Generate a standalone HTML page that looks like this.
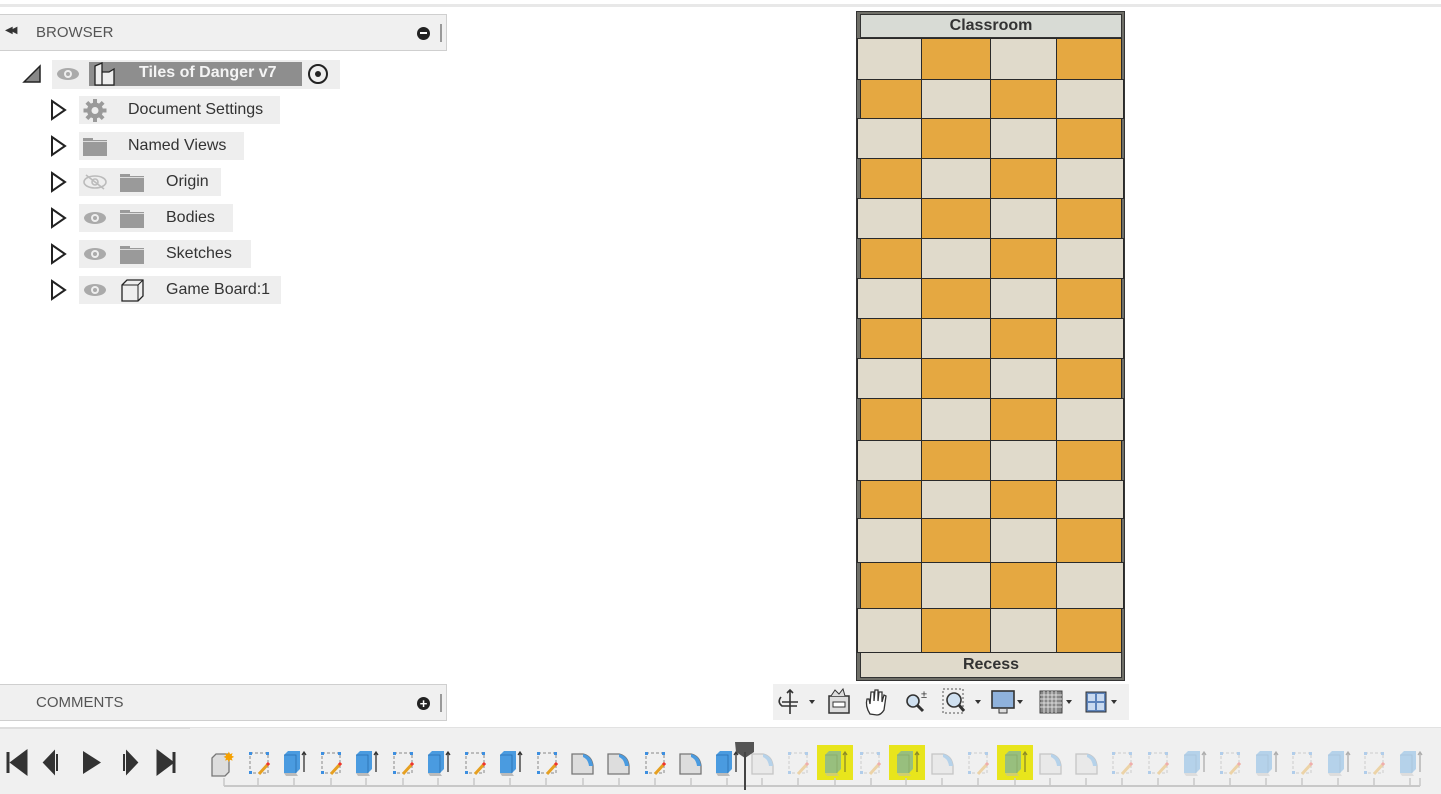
<!DOCTYPE html>
<html><head><meta charset="utf-8"><style>
*{margin:0;padding:0;box-sizing:border-box}
body{width:1441px;height:794px;background:#fff;position:relative;overflow:hidden;font-family:"Liberation Sans",sans-serif;}
.abs{position:absolute}
.panel{position:absolute;left:0;width:447px;background:#f0f0f0;border:1px solid #cfcfcf;border-left:none}
.row{position:absolute;height:28px;background:#eeeeee;font-size:15px;color:#3c3c3c;line-height:28px}
.tri{position:absolute;left:50px;width:16px;height:20px}
.cell{position:absolute;border:1px solid #2a2a2a}
.o{background:#e5a841}.b{background:#e0dacb}
</style></head><body>
<div class="abs" style="left:0;top:4px;width:1441px;height:3px;background:#e8e8e8"></div>

<!-- Browser header -->
<div class="panel" style="top:14px;height:37px">
  <div class="abs" style="left:5px;top:10px;font-size:10px;color:#333;letter-spacing:-3px">◀◀</div>
  <div class="abs" style="left:36px;top:9px;font-size:15px;color:#555">BROWSER</div>
  <div class="abs" style="left:417px;top:12px;width:13px;height:13px;border-radius:50%;background:#222"><div class="abs" style="left:3px;top:5px;width:7px;height:2px;background:#fff"></div></div>
  <div class="abs" style="left:440px;top:9px;width:2px;height:18px;border-left:1px solid #999;border-right:1px solid #999"></div>
</div>

<!-- root row -->
<svg class="abs" style="left:22px;top:64px" width="20" height="20"><path d="M2 18 L18 2 L18 18 Z" fill="#888" stroke="#222" stroke-width="1.5"/></svg>
<div class="row" style="left:52px;top:60px;width:288px;height:29px"></div>
<svg class="abs" style="left:56px;top:66px" width="24" height="16"><ellipse cx="12" cy="8" rx="11" ry="6" fill="#aaa"/><circle cx="12" cy="8" r="4" fill="#eee"/><circle cx="12" cy="8" r="2" fill="#aaa"/></svg>
<div class="abs" style="left:89px;top:62px;width:213px;height:24px;background:#8e8e8e"></div>
<svg class="abs" style="left:92px;top:62px" width="28" height="25"><path d="M3 4 L10 1 L10 23 L3 23 Z M10 10 L17 10 L22 7 L22 23 L10 23" fill="#eee" stroke="#222" stroke-width="1.3"/></svg>
<div class="abs" style="left:139px;top:64px;font-size:16px;font-weight:bold;color:#f4f4f4">Tiles of Danger v7</div>
<div class="abs" style="left:308px;top:64px;width:20px;height:20px;border-radius:50%;border:2px solid #222"><div class="abs" style="left:5px;top:5px;width:6px;height:6px;border-radius:50%;background:#222"></div></div>

<!-- children -->
<svg class="abs" style="left:50px;top:99px" width="18" height="22"><path d="M2 2 L15 11 L2 20 Z" fill="none" stroke="#222" stroke-width="2"/></svg>
<div class="row" style="left:79px;top:96px;width:201px"></div>
<svg class="abs" style="left:82px;top:98px" width="26" height="25" viewBox="0 0 26 25"><g fill="#9a9a9a"><circle cx="13" cy="12.5" r="8"/><rect x="11" y="1" width="4" height="23"/><rect x="1.5" y="10.5" width="23" height="4"/><rect x="11" y="1" width="4" height="23" transform="rotate(45 13 12.5)"/><rect x="11" y="1" width="4" height="23" transform="rotate(-45 13 12.5)"/></g><circle cx="13" cy="12.5" r="3.5" fill="#eee"/></svg>
<div class="abs" style="left:128px;top:101px;font-size:16px;color:#333">Document Settings</div>

<svg class="abs" style="left:50px;top:135px" width="18" height="22"><path d="M2 2 L15 11 L2 20 Z" fill="none" stroke="#222" stroke-width="2"/></svg>
<div class="row" style="left:79px;top:132px;width:165px"></div>
<svg class="abs" style="left:83px;top:136px" width="26" height="22"><path d="M0 2 H10 V4 H24 V20 H0 Z" fill="#9a9a9a"/><rect x="0" y="5" width="24" height="1" fill="#ddd"/></svg>
<div class="abs" style="left:128px;top:137px;font-size:16px;color:#333">Named Views</div>

<svg class="abs" style="left:50px;top:171px" width="18" height="22"><path d="M2 2 L15 11 L2 20 Z" fill="none" stroke="#222" stroke-width="2"/></svg>
<div class="row" style="left:79px;top:168px;width:142px"></div>
<svg class="abs" style="left:83px;top:174px" width="24" height="16"><ellipse cx="12" cy="8" rx="11" ry="6" fill="none" stroke="#bbb" stroke-width="1.6"/><circle cx="12" cy="8" r="3" fill="none" stroke="#bbb" stroke-width="1.6"/><line x1="3" y1="1" x2="21" y2="15" stroke="#bbb" stroke-width="1.6"/></svg>
<svg class="abs" style="left:120px;top:172px" width="26" height="22"><path d="M0 2 H10 V4 H24 V20 H0 Z" fill="#9a9a9a"/><rect x="0" y="5" width="24" height="1" fill="#ddd"/></svg>
<div class="abs" style="left:166px;top:173px;font-size:16px;color:#333">Origin</div>

<svg class="abs" style="left:50px;top:207px" width="18" height="22"><path d="M2 2 L15 11 L2 20 Z" fill="none" stroke="#222" stroke-width="2"/></svg>
<div class="row" style="left:79px;top:204px;width:154px"></div>
<svg class="abs" style="left:83px;top:210px" width="24" height="16"><ellipse cx="12" cy="8" rx="11" ry="6" fill="#aaa"/><circle cx="12" cy="8" r="4" fill="#eee"/><circle cx="12" cy="8" r="2" fill="#aaa"/></svg>
<svg class="abs" style="left:120px;top:208px" width="26" height="22"><path d="M0 2 H10 V4 H24 V20 H0 Z" fill="#9a9a9a"/><rect x="0" y="5" width="24" height="1" fill="#ddd"/></svg>
<div class="abs" style="left:166px;top:209px;font-size:16px;color:#333">Bodies</div>

<svg class="abs" style="left:50px;top:243px" width="18" height="22"><path d="M2 2 L15 11 L2 20 Z" fill="none" stroke="#222" stroke-width="2"/></svg>
<div class="row" style="left:79px;top:240px;width:172px"></div>
<svg class="abs" style="left:83px;top:246px" width="24" height="16"><ellipse cx="12" cy="8" rx="11" ry="6" fill="#aaa"/><circle cx="12" cy="8" r="4" fill="#eee"/><circle cx="12" cy="8" r="2" fill="#aaa"/></svg>
<svg class="abs" style="left:120px;top:244px" width="26" height="22"><path d="M0 2 H10 V4 H24 V20 H0 Z" fill="#9a9a9a"/><rect x="0" y="5" width="24" height="1" fill="#ddd"/></svg>
<div class="abs" style="left:166px;top:245px;font-size:16px;color:#333">Sketches</div>

<svg class="abs" style="left:50px;top:279px" width="18" height="22"><path d="M2 2 L15 11 L2 20 Z" fill="none" stroke="#222" stroke-width="2"/></svg>
<div class="row" style="left:79px;top:276px;width:202px"></div>
<svg class="abs" style="left:83px;top:282px" width="24" height="16"><ellipse cx="12" cy="8" rx="11" ry="6" fill="#aaa"/><circle cx="12" cy="8" r="4" fill="#eee"/><circle cx="12" cy="8" r="2" fill="#aaa"/></svg>
<svg class="abs" style="left:120px;top:278px" width="26" height="25"><path d="M2 7 L7 2 H23 V18 L18 23 H2 Z" fill="#eee" stroke="#222" stroke-width="1.3"/><path d="M18 23 V7 H2 M18 7 L23 2" fill="none" stroke="#222" stroke-width="1"/></svg>
<div class="abs" style="left:166px;top:281px;font-size:16px;color:#333">Game Board:1</div>

<!-- Comments -->
<div class="panel" style="top:684px;height:37px">
  <div class="abs" style="left:36px;top:9px;font-size:15px;color:#555">COMMENTS</div>
  <div class="abs" style="left:417px;top:12px;width:13px;height:13px;border-radius:50%;background:#222;color:#fff;font-size:13px;line-height:13px;text-align:center;font-weight:bold">+</div>
  <div class="abs" style="left:440px;top:9px;width:2px;height:18px;border-left:1px solid #999;border-right:1px solid #999"></div>
</div>

<!-- Board -->
<div class="abs" style="left:856px;top:11px;width:269px;height:670px;background:#6f6f68;border:1px solid #333">
  <div class="abs" style="left:3px;top:2px;width:262px;height:24px;background:#d8dbd5;border:1px solid #333;text-align:center;font-weight:bold;font-size:16px;line-height:22px;color:#333">Classroom</div>
  <div class="abs" style="left:3px;top:640px;width:262px;height:26px;background:#e0dacb;border:1px solid #333;text-align:center;font-weight:bold;font-size:16px;line-height:24px;color:#333">Recess</div>
  <div class="abs" style="left:0;top:26px">
  <!-- rows -->
  <div class="cell b" style="left:0;top:0;width:65px;height:42px"></div><div class="cell o" style="left:64px;top:0;width:70px;height:42px"></div><div class="cell b" style="left:133px;top:0;width:67px;height:42px"></div><div class="cell o" style="left:199px;top:0;width:66px;height:42px"></div>
  <div class="cell o" style="left:3px;top:41px;width:62px;height:40px"></div><div class="cell b" style="left:64px;top:41px;width:70px;height:40px"></div><div class="cell o" style="left:133px;top:41px;width:67px;height:40px"></div><div class="cell b" style="left:199px;top:41px;width:68px;height:40px"></div>
  <div class="cell b" style="left:0;top:80px;width:65px;height:41px"></div><div class="cell o" style="left:64px;top:80px;width:70px;height:41px"></div><div class="cell b" style="left:133px;top:80px;width:67px;height:41px"></div><div class="cell o" style="left:199px;top:80px;width:66px;height:41px"></div>
  <div class="cell o" style="left:3px;top:120px;width:62px;height:41px"></div><div class="cell b" style="left:64px;top:120px;width:70px;height:41px"></div><div class="cell o" style="left:133px;top:120px;width:67px;height:41px"></div><div class="cell b" style="left:199px;top:120px;width:68px;height:41px"></div>
  <div class="cell b" style="left:0;top:160px;width:65px;height:41px"></div><div class="cell o" style="left:64px;top:160px;width:70px;height:41px"></div><div class="cell b" style="left:133px;top:160px;width:67px;height:41px"></div><div class="cell o" style="left:199px;top:160px;width:66px;height:41px"></div>
  <div class="cell o" style="left:3px;top:200px;width:62px;height:41px"></div><div class="cell b" style="left:64px;top:200px;width:70px;height:41px"></div><div class="cell o" style="left:133px;top:200px;width:67px;height:41px"></div><div class="cell b" style="left:199px;top:200px;width:68px;height:41px"></div>
  <div class="cell b" style="left:0;top:240px;width:65px;height:41px"></div><div class="cell o" style="left:64px;top:240px;width:70px;height:41px"></div><div class="cell b" style="left:133px;top:240px;width:67px;height:41px"></div><div class="cell o" style="left:199px;top:240px;width:66px;height:41px"></div>
  <div class="cell o" style="left:3px;top:280px;width:62px;height:41px"></div><div class="cell b" style="left:64px;top:280px;width:70px;height:41px"></div><div class="cell o" style="left:133px;top:280px;width:67px;height:41px"></div><div class="cell b" style="left:199px;top:280px;width:68px;height:41px"></div>
  <div class="cell b" style="left:0;top:320px;width:65px;height:41px"></div><div class="cell o" style="left:64px;top:320px;width:70px;height:41px"></div><div class="cell b" style="left:133px;top:320px;width:67px;height:41px"></div><div class="cell o" style="left:199px;top:320px;width:66px;height:41px"></div>
  <div class="cell o" style="left:3px;top:360px;width:62px;height:43px"></div><div class="cell b" style="left:64px;top:360px;width:70px;height:43px"></div><div class="cell o" style="left:133px;top:360px;width:67px;height:43px"></div><div class="cell b" style="left:199px;top:360px;width:68px;height:43px"></div>
  <div class="cell b" style="left:0;top:402px;width:65px;height:41px"></div><div class="cell o" style="left:64px;top:402px;width:70px;height:41px"></div><div class="cell b" style="left:133px;top:402px;width:67px;height:41px"></div><div class="cell o" style="left:199px;top:402px;width:66px;height:41px"></div>
  <div class="cell o" style="left:3px;top:442px;width:62px;height:39px"></div><div class="cell b" style="left:64px;top:442px;width:70px;height:39px"></div><div class="cell o" style="left:133px;top:442px;width:67px;height:39px"></div><div class="cell b" style="left:199px;top:442px;width:68px;height:39px"></div>
  <div class="cell b" style="left:0;top:480px;width:65px;height:45px"></div><div class="cell o" style="left:64px;top:480px;width:70px;height:45px"></div><div class="cell b" style="left:133px;top:480px;width:67px;height:45px"></div><div class="cell o" style="left:199px;top:480px;width:66px;height:45px"></div>
  <div class="cell o" style="left:3px;top:524px;width:62px;height:47px"></div><div class="cell b" style="left:64px;top:524px;width:70px;height:47px"></div><div class="cell o" style="left:133px;top:524px;width:67px;height:47px"></div><div class="cell b" style="left:199px;top:524px;width:68px;height:47px"></div>
  <div class="cell b" style="left:0;top:570px;width:65px;height:45px"></div><div class="cell o" style="left:64px;top:570px;width:70px;height:45px"></div><div class="cell b" style="left:133px;top:570px;width:67px;height:45px"></div><div class="cell o" style="left:199px;top:570px;width:66px;height:45px"></div>
  </div>
</div>

<!-- nav toolbar -->
<div class="abs" style="left:773px;top:684px;width:356px;height:36px;background:#f0f0f0"></div>
<svg class="abs" style="left:773px;top:684px" width="356" height="36">
  <g stroke="#333" fill="none" stroke-width="1.6">
    <path d="M17 6 V30 M9 18 H25 M14 9 L17 6 L20 9 M8 13 Q4 18 9 22 L24 22"/>
  </g>
  <path d="M36 16 l6 0 l-3 4z" fill="#333"/>
  <rect x="56" y="12" width="20" height="17" fill="#ddd" stroke="#333" stroke-width="1.5"/><rect x="60" y="18" width="12" height="5" fill="#fff" stroke="#333"/><path d="M58 12 L62 6 L66 10 L70 5 L72 12" fill="#ddd" stroke="#333"/>
  <path d="M97 30 Q92 22 94 15 L96 15 L97 20 L98 8 L101 8 L101 17 L102 6 L105 6 L105 17 L106 8 L109 8 L109 18 L111 11 L113 12 L111 26 Q108 31 104 31 Z" fill="#fff" stroke="#333" stroke-width="1.3"/>
  <circle cx="140" cy="17" r="6" fill="#cfe0f0" stroke="#333" stroke-width="1.6"/><path d="M144 21 L150 27" stroke="#333" stroke-width="3"/><text x="148" y="14" font-size="11" fill="#333" font-family="Liberation Sans">±</text>
  <rect x="170" y="5" width="20" height="24" fill="none" stroke="#555" stroke-dasharray="2 2"/><circle cx="181" cy="16" r="7" fill="#cfe0f0" stroke="#333" stroke-width="1.6"/><path d="M186 21 L191 27" stroke="#333" stroke-width="3"/>
  <path d="M202 16 l6 0 l-3 4z" fill="#333"/>
  <rect x="219" y="7" width="22" height="17" fill="#8fb2dc" stroke="#333" stroke-width="1.6"/><path d="M226 25 L226 29 L234 29 L234 25" fill="#ddd" stroke="#333"/>
  <path d="M244 16 l6 0 l-3 4z" fill="#333"/>
  <rect x="267" y="7" width="22" height="22" fill="#888" stroke="#444"/><path d="M271 7V29M275 7V29M279 7V29M283 7V29M267 11H289M267 15H289M267 19H289M267 23H289" stroke="#ddd" stroke-width="1"/>
  <path d="M293 16 l6 0 l-3 4z" fill="#333"/>
  <rect x="313" y="8" width="20" height="20" fill="#5c83bb" stroke="#333"/><rect x="315" y="10" width="7" height="7" fill="#c9daf0"/><rect x="324" y="10" width="7" height="7" fill="#c9daf0"/><rect x="315" y="19" width="7" height="7" fill="#c9daf0"/><rect x="324" y="19" width="7" height="7" fill="#c9daf0"/>
  <path d="M338 16 l6 0 l-3 4z" fill="#333"/>
</svg>

<!-- timeline -->
<div class="abs" style="left:0;top:727px;width:1441px;height:67px;background:#f0f0f0;border-top:1px solid #e2e2e2"></div>
<div class="abs" style="left:0;top:727px;width:190px;height:2px;background:#ddd"></div>
<svg class="abs" style="left:0;top:728px" width="1441" height="66">
  <defs>
    <g id="sk"><rect x="1" y="1" width="18" height="20" fill="none" stroke="#888" stroke-width="1" stroke-dasharray="3 2"/><rect x="0" y="0" width="3" height="3" fill="#3d8fe0"/><rect x="17" y="0" width="3" height="3" fill="#3d8fe0"/><rect x="0" y="19" width="3" height="3" fill="#3d8fe0"/><path d="M10 22 L20 11" stroke="#e6a021" stroke-width="3"/><path d="M18 13 L20 11" stroke="#e33" stroke-width="3"/></g>
    <g id="ex"><path d="M0 5 L4 1 H16 V19 L12 23 H0 Z" fill="#4a9be0"/><path d="M0 5 H12 V23" fill="none" stroke="#2a6fb0" stroke-width="0.8"/><path d="M0 23 H12 L14 26 H2 Z" fill="#bbb"/><path d="M20 22 V2 M18 5 L20 2 L22 5" stroke="#333" stroke-width="1.3" fill="none"/></g>
    <g id="fi"><path d="M1 24 V4 H12 Q21 6 22 16 V24 Z" fill="#ddd" stroke="#777" stroke-width="1.3"/><path d="M12 4 Q21 6 22 16 L18 16 Q17 9 12 7 Z" fill="#4a9be0"/></g>
  </defs>
  <path d="M8 24 V45 M26 24 L12 34.5 L26 45 Z" fill="#333" stroke="#333" stroke-width="3"/>
  <path d="M54 24 L44 34.5 L54 45 Z M57 26 V43" fill="#333" stroke="#333" stroke-width="2"/>
  <path d="M83 23 L101 34.5 L83 46 Z" fill="#333"/>
  <path d="M124 26 V43 M127 24 L137 34.5 L127 45 Z" fill="#333" stroke="#333" stroke-width="2"/>
  <path d="M158 24 L172 34.5 L158 45 Z M174 24 V45" fill="#333" stroke="#333" stroke-width="3"/>
  <g transform="translate(211,24)"><path d="M1 6 L5 2 H18 V20 L14 24 H1 Z" fill="#ddd" stroke="#777" stroke-width="1.3"/><text x="12" y="10" font-size="14" fill="#f5a000" font-family="DejaVu Sans">✸</text></g>
  <use href="#sk" transform="translate(249,24)"/><use href="#ex" transform="translate(284,22)"/>
  <use href="#sk" transform="translate(321,24)"/><use href="#ex" transform="translate(356,22)"/>
  <use href="#sk" transform="translate(393,24)"/><use href="#ex" transform="translate(428,22)"/>
  <use href="#sk" transform="translate(465,24)"/><use href="#ex" transform="translate(500,22)"/>
  <use href="#sk" transform="translate(537,24)"/>
  <use href="#fi" transform="translate(571,22)"/><use href="#fi" transform="translate(607,22)"/>
  <use href="#sk" transform="translate(645,24)"/><use href="#fi" transform="translate(679,22)"/>
  <use href="#ex" transform="translate(716,22)"/>
  <rect x="817" y="17" width="36" height="35" fill="#e8e51c"/>
  <rect x="889" y="17" width="36" height="35" fill="#e8e51c"/>
  <rect x="997" y="17" width="36" height="35" fill="#e8e51c"/>
  <g opacity="0.35">
    <use href="#fi" transform="translate(751,22)"/><use href="#sk" transform="translate(788,24)"/>
    <use href="#sk" transform="translate(860,24)"/>
    <use href="#fi" transform="translate(931,22)"/><use href="#sk" transform="translate(968,24)"/>
    <use href="#fi" transform="translate(1039,22)"/><use href="#fi" transform="translate(1075,22)"/>
    <use href="#sk" transform="translate(1112,24)"/><use href="#sk" transform="translate(1148,24)"/>
    <use href="#ex" transform="translate(1184,22)"/><use href="#sk" transform="translate(1220,24)"/>
    <use href="#ex" transform="translate(1256,22)"/><use href="#sk" transform="translate(1292,24)"/>
    <use href="#ex" transform="translate(1328,22)"/><use href="#sk" transform="translate(1364,24)"/>
    <use href="#ex" transform="translate(1400,22)"/>
  </g>
  <g opacity="0.5"><use href="#ex" transform="translate(825,22)"/><use href="#ex" transform="translate(897,22)"/><use href="#ex" transform="translate(1005,22)"/></g>
  <path d="M224 58 H1420" stroke="#c8c8c8" stroke-width="2"/>
  <path d="M224 50V58M258 50V58M294 50V58M331 50V58M366 50V58M403 50V58M438 50V58M474 50V58M510 50V58M546 50V58M583 50V58M619 50V58M655 50V58M691 50V58M727 50V58M762 50V58M798 50V58M835 50V58M871 50V58M906 50V58M942 50V58M978 50V58M1015 50V58M1050 50V58M1086 50V58M1122 50V58M1158 50V58M1194 50V58M1230 50V58M1266 50V58M1302 50V58M1338 50V58M1374 50V58M1410 50V58M1420 50V58" stroke="#c8c8c8" stroke-width="1.5"/>
  <path d="M735 14 H754 V24 L745 30 L736 24 Z" fill="#555"/><path d="M745 24 V62" stroke="#444" stroke-width="2"/>
</svg>
</body></html>
